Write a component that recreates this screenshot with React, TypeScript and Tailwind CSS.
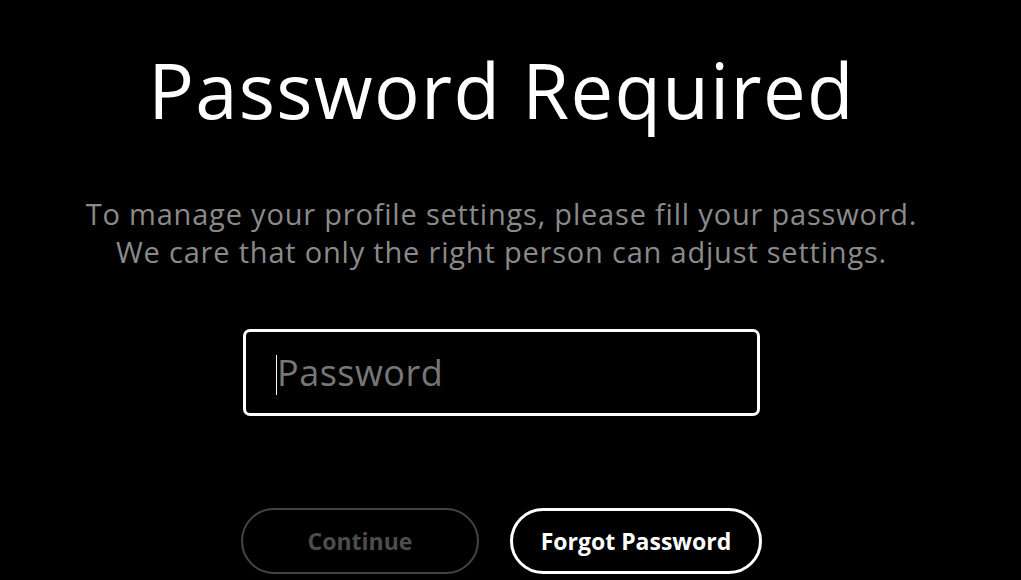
export default function App() {
  return (
    <div className="min-h-[580px] h-[580px] w-full bg-black overflow-hidden" style={{ fontFamily: '"Open Sans", "Noto Sans", sans-serif' }}>
      <div className="w-[1003px] flex flex-col items-center">
        <h1 className="mt-[40px] text-[76px] leading-[100px] text-white font-normal tracking-[1.3px]">
          Password Required
        </h1>
        <p className="mt-[55px] text-center text-[29px] leading-[38px] text-[#8a8a8a] tracking-[0.8px]">
          To manage your profile settings, please fill your password.
          <br />
          We care that only the right person can adjust settings.
        </p>
        <div className="relative mt-[58px] w-[517px] h-[87px] border-[3px] border-white rounded-[7px] flex items-center pl-[31px]">
          <span className="absolute left-[30px] top-[23px] w-px h-[40px] bg-white" />
          <input
            autoFocus
            type="password"
            placeholder="Password"
            className="w-full bg-transparent outline-none text-[36px] tracking-[0.5px] text-white placeholder-[#777] caret-transparent"
          />
        </div>
        <div className="mt-[92px] flex gap-[31px]">
          <button className="w-[238px] h-[66px] rounded-full border-2 border-[#444] text-[#4d4d4d] text-[23px] font-bold">
            Continue
          </button>
          <button className="w-[252px] h-[66px] rounded-full border-[3px] border-white text-white text-[23px] font-bold">
            Forgot Password
          </button>
        </div>
      </div>
    </div>
  );
}
